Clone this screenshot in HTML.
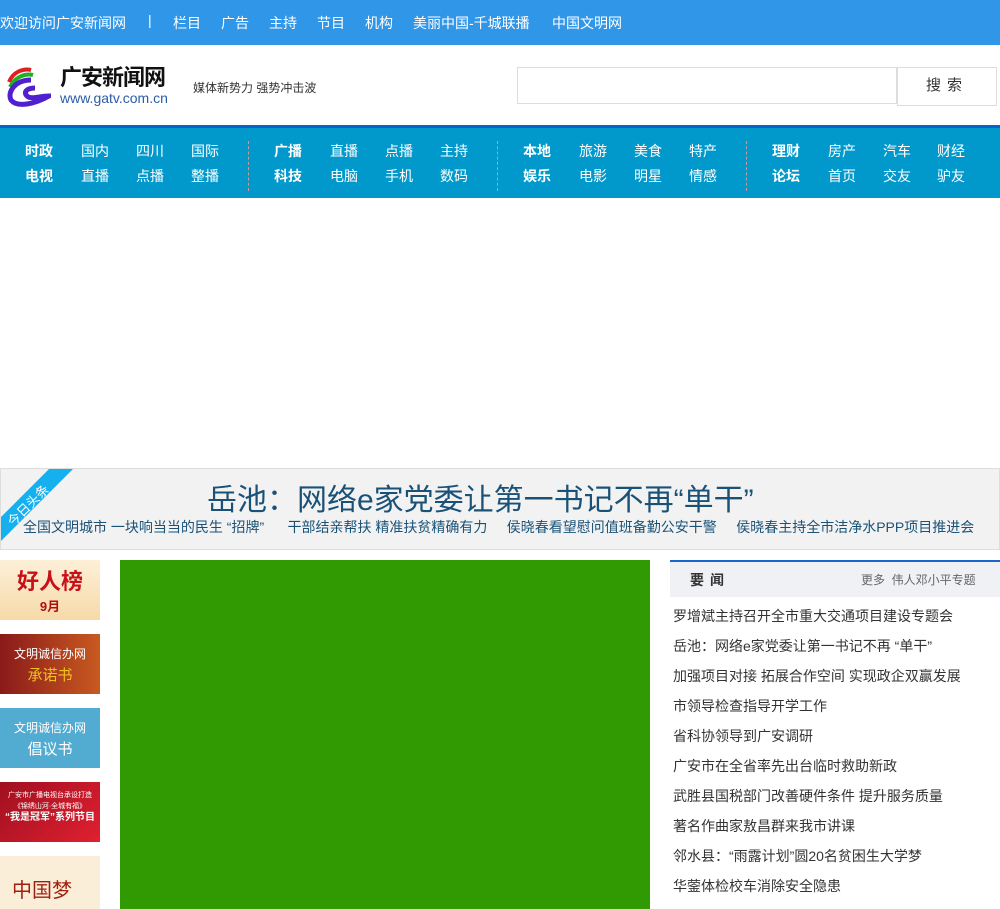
<!DOCTYPE html>
<html><head><meta charset="utf-8"><style>
*{margin:0;padding:0;box-sizing:border-box}
body{width:1000px;height:909px;overflow:hidden;background:#fff;font-family:"Liberation Sans","Noto Sans CJK SC",sans-serif;font-size:14px;color:#333;position:relative}
.a{position:absolute;white-space:nowrap}
.top{position:absolute;left:0;top:0;width:1000px;height:45px;background:#3096e8;color:#fff;font-size:14px}
.nav{position:absolute;left:0;top:125px;width:1000px;height:73px;background:#0199cb;border-top:3px solid #0466c8;color:#fff;font-size:14px}
.nav b{font-weight:bold}
.sep{position:absolute;top:13px;height:50px;border-left:1px dashed #c99}
.hl{position:absolute;left:0;top:468px;width:1000px;height:82px;background:#f2f2f2;border:1px solid #ddd}
.li{position:absolute;left:673px;font-size:14px;color:#333}
</style></head><body>
<div class="top">
<span class="a" style="left:0;top:13px">欢迎访问广安新闻网</span>
<span class="a" style="left:148px;top:12px">|</span>
<span class="a" style="left:173px;top:13px">栏目</span>
<span class="a" style="left:221px;top:13px">广告</span>
<span class="a" style="left:269px;top:13px">主持</span>
<span class="a" style="left:317px;top:13px">节目</span>
<span class="a" style="left:365px;top:13px">机构</span>
<span class="a" style="left:413px;top:13px">美丽中国-千城联播</span>
<span class="a" style="left:552px;top:13px">中国文明网</span>
</div>
<svg class="a" style="left:5px;top:66px" width="46" height="42" viewBox="0 0 46 42">
<path d="M4 16 C8 6 18 2 26 4" stroke="#e02020" stroke-width="4" fill="none"/>
<path d="M5 21 C10 11 20 7 28 9" stroke="#20b020" stroke-width="4" fill="none"/>
<path d="M26 14 C10 14 2 26 6 34 C12 42 30 38 44 30 C34 30 26 34 22 30 C18 26 22 22 30 22" stroke="#5020d0" stroke-width="5" fill="none"/>
</svg>
<span class="a" style="left:60px;top:67px;font-size:22px;line-height:22px;color:#111;font-weight:bold;letter-spacing:-1px">广安新闻网</span>
<span class="a" style="left:60px;top:91px;font-size:14px;line-height:14px;color:#2a5ca8">www.gatv.com.cn</span>
<span class="a" style="left:193px;top:79px;font-size:12px;color:#333">媒体新势力 强势冲击波</span>
<div class="a" style="left:517px;top:67px;width:380px;height:37px;border:1px solid #ddd"></div>
<div class="a" style="left:897px;top:67px;width:100px;height:39px;border:1px solid #ddd;text-align:center;line-height:36px;font-size:15px;letter-spacing:6px;color:#333">搜索</div>
<div class="nav">
<div class="sep" style="left:248px"></div><div class="sep" style="left:497px"></div><div class="sep" style="left:746px"></div>
<span class="a" style="left:25px;top:13px"><b>时政</b></span><span class="a" style="left:81px;top:13px">国内</span><span class="a" style="left:136px;top:13px">四川</span><span class="a" style="left:191px;top:13px">国际</span>
<span class="a" style="left:25px;top:38px"><b>电视</b></span><span class="a" style="left:81px;top:38px">直播</span><span class="a" style="left:136px;top:38px">点播</span><span class="a" style="left:191px;top:38px">整播</span>
<span class="a" style="left:274px;top:13px"><b>广播</b></span><span class="a" style="left:330px;top:13px">直播</span><span class="a" style="left:385px;top:13px">点播</span><span class="a" style="left:440px;top:13px">主持</span>
<span class="a" style="left:274px;top:38px"><b>科技</b></span><span class="a" style="left:330px;top:38px">电脑</span><span class="a" style="left:385px;top:38px">手机</span><span class="a" style="left:440px;top:38px">数码</span>
<span class="a" style="left:523px;top:13px"><b>本地</b></span><span class="a" style="left:579px;top:13px">旅游</span><span class="a" style="left:634px;top:13px">美食</span><span class="a" style="left:689px;top:13px">特产</span>
<span class="a" style="left:523px;top:38px"><b>娱乐</b></span><span class="a" style="left:579px;top:38px">电影</span><span class="a" style="left:634px;top:38px">明星</span><span class="a" style="left:689px;top:38px">情感</span>
<span class="a" style="left:772px;top:13px"><b>理财</b></span><span class="a" style="left:828px;top:13px">房产</span><span class="a" style="left:883px;top:13px">汽车</span><span class="a" style="left:937px;top:13px">财经</span>
<span class="a" style="left:772px;top:38px"><b>论坛</b></span><span class="a" style="left:828px;top:38px">首页</span><span class="a" style="left:883px;top:38px">交友</span><span class="a" style="left:937px;top:38px">驴友</span>
</div>
<div class="hl"></div>
<svg class="a" style="left:1px;top:469px" width="72" height="72"><polygon points="0,48 48,0 72,0 0,72" fill="#16b0ee"/><text x="0" y="0" transform="translate(12,58) rotate(-45)" fill="#fff" font-size="13" font-family="Noto Sans CJK SC,sans-serif">今日头条</text></svg>
<span class="a" style="left:207px;top:475px;font-size:30px;color:#1a5277">岳池：网络e家党委让第一书记不再“单干”</span>
<span class="a" style="left:23px;top:517px;font-size:14px;color:#1a5277;word-spacing:0">全国文明城市 一块响当当的民生 “招牌”&nbsp;&nbsp;&nbsp;&nbsp;&nbsp;&nbsp;干部结亲帮扶 精准扶贫精确有力&nbsp;&nbsp;&nbsp;&nbsp;&nbsp;侯晓春看望慰问值班备勤公安干警&nbsp;&nbsp;&nbsp;&nbsp;&nbsp;侯晓春主持全市洁净水PPP项目推进会</span>
<div class="a" style="left:0;top:560px;width:100px;height:60px;background:linear-gradient(#fdf0d8,#f6d9a8);text-align:center"><span style="display:block;color:#c8101a;font-weight:bold;font-size:22px;margin-top:4px">好人榜</span><span style="color:#b01010;font-weight:bold;font-size:13px">9月</span></div>
<div class="a" style="left:0;top:634px;width:100px;height:60px;background:linear-gradient(90deg,#8a1a1a,#c85a20);color:#fff;text-align:center;font-size:12px;padding-top:9px;line-height:22px">文明诚信办网<br><span style="color:#f0c020;font-size:15px">承诺书</span></div>
<div class="a" style="left:0;top:708px;width:100px;height:60px;background:#52acd2;color:#fff;text-align:center;font-size:12px;padding-top:9px;line-height:22px">文明诚信办网<br><span style="font-size:15px">倡议书</span></div>
<div class="a" style="left:0;top:782px;width:100px;height:60px;background:linear-gradient(135deg,#a01020,#e02030);color:#fff;text-align:center;font-size:7px;padding-top:8px;line-height:11px">广安市广播电视台承设打造<br>《锦绣山河·全城有福》<br><span style="font-size:10px;font-weight:bold">“我是冠军”系列节目</span></div>
<div class="a" style="left:0;top:856px;width:100px;height:53px;background:#fbeed8;color:#a02010;font-size:20px;padding:18px 0 0 12px">中国梦</div>
<div class="a" style="left:120px;top:560px;width:530px;height:349px;background:#319902"></div>
<div class="a" style="left:670px;top:560px;width:330px;height:37px;background:#f0f1f5;border-top:2px solid #1a66cc"></div>
<span class="a" style="left:690px;top:570px;font-size:14px;font-weight:bold;color:#333;letter-spacing:6px">要闻</span>
<span class="a" style="left:861px;top:571px;font-size:12px;color:#666">更多&nbsp;&nbsp;伟人邓小平专题</span>
<span class="li a" style="top:606px">罗增斌主持召开全市重大交通项目建设专题会</span>
<span class="li a" style="top:636px">岳池：网络e家党委让第一书记不再 “单干”</span>
<span class="li a" style="top:666px">加强项目对接 拓展合作空间 实现政企双赢发展</span>
<span class="li a" style="top:696px">市领导检查指导开学工作</span>
<span class="li a" style="top:726px">省科协领导到广安调研</span>
<span class="li a" style="top:756px">广安市在全省率先出台临时救助新政</span>
<span class="li a" style="top:786px">武胜县国税部门改善硬件条件 提升服务质量</span>
<span class="li a" style="top:816px">著名作曲家敖昌群来我市讲课</span>
<span class="li a" style="top:846px">邻水县：“雨露计划”圆20名贫困生大学梦</span>
<span class="li a" style="top:876px">华蓥体检校车消除安全隐患</span>
</body></html>
